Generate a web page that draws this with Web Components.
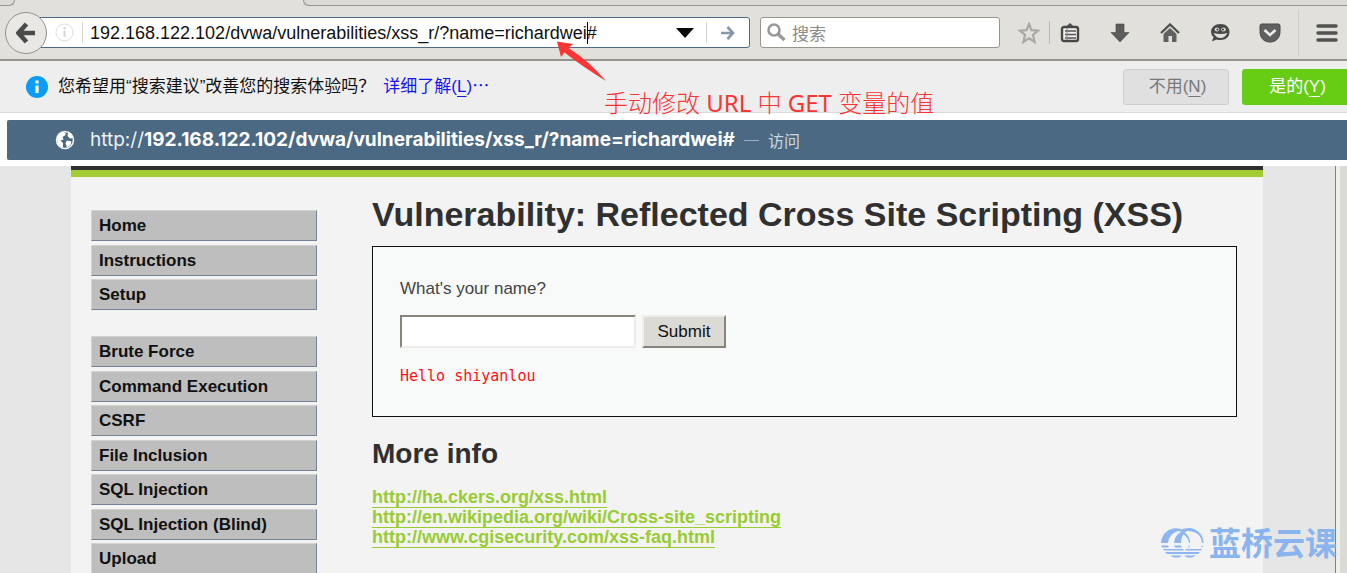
<!DOCTYPE html>
<html lang="zh-CN">
<head>
<meta charset="utf-8">
<title>Reflected Cross Site Scripting (XSS)</title>
<style>
html, body { height: 100%; }
body { margin: 0; overflow: hidden; font-family: "Liberation Sans", "Noto Sans CJK SC", sans-serif; font-size: 17px; color: #111; }
</style>
</head>
<body>
<browser-window>
  <tab-edge slot="chrome"></tab-edge>
  <nav-toolbar slot="chrome">
    <address-bar value="192.168.122.102/dvwa/vulnerabilities/xss_r/?name=richardwei#"></address-bar>
    <search-bar></search-bar>
    <toolbar-actions></toolbar-actions>
  </nav-toolbar>
  <notice-bar slot="chrome">您希望用“搜索建议”改善您的搜索体验吗？</notice-bar>
  <url-suggestion slot="chrome">
    <span slot="scheme">http://</span>
    <span slot="url">192.168.122.102/dvwa/vulnerabilities/xss_r/?name=richardwei#</span>
    <span slot="action">访问</span>
  </url-suggestion>
  <red-note slot="chrome">手动修改 <b>URL</b> 中 <b>GET</b> 变量的值</red-note>
  <web-page>
    <side-menu slot="menu">
      <menu-group>
        <menu-item>Home</menu-item><menu-item>Instructions</menu-item><menu-item>Setup</menu-item>
      </menu-group>
      <menu-group>
        <menu-item>Brute Force</menu-item><menu-item>Command Execution</menu-item><menu-item>CSRF</menu-item><menu-item>File Inclusion</menu-item><menu-item>SQL Injection</menu-item><menu-item>SQL Injection (Blind)</menu-item><menu-item>Upload</menu-item>
      </menu-group>
    </side-menu>
    <page-title>Vulnerability: Reflected Cross Site Scripting (XSS)</page-title>
    <name-form greeting="Hello shiyanlou"></name-form>
    <more-info></more-info>
    <site-watermark slot="mark">蓝桥云课</site-watermark>
  </web-page>
</browser-window>

<script>
const define = (name, html, setup) => {
  const template = document.createElement("template");
  template.innerHTML = html;
  customElements.define(name, class extends HTMLElement {
    connectedCallback() {
      if (this.shadowRoot) return;
      const root = this.attachShadow({ mode: "open" });
      root.append(template.content.cloneNode(true));
      if (setup) setup(this, root);
    }
  });
};

define("browser-window", `
<style>
:host { display: flex; flex-direction: column; height: 100vh; position: relative; background: #fff; overflow: hidden; }
</style>
<slot name="chrome"></slot><slot></slot>`);

// Lower edge of the tab strip, with the selected tab opening into the toolbar
define("tab-edge", `
<style>
:host { display: flex; height: 6px; background: #dbdad5; }
.before { width: 14px; border: 1px solid #98948f; border-width: 0 1px 1px 0; border-radius: 0 0 10px 0; }
.tab { width: 288px; background: #e1e0db; }
.after { flex: 1; border: 1px solid #98948f; border-width: 0 0 1px 1px; border-radius: 0 0 0 10px; }
</style>
<div class="before"></div><div class="tab"></div><div class="after"></div>`);

define("nav-toolbar", `
<style>
:host { display: flex; align-items: center; height: 53px; background: #e1e0db; border-bottom: 2px solid #96928e; box-sizing: content-box; gap: 10px; }
</style>
<slot></slot>`);

define("address-bar", `
<style>
:host { display: flex; align-items: center; flex: 1; min-width: 0; }
button { padding: 0; border: 0; background: none; display: flex; }
.back { width: 42px; height: 42px; margin-left: 5px; box-sizing: border-box; border: 1px solid #96928a; border-radius: 50%; background: #e9e8e4; align-items: center; justify-content: center; z-index: 1; }
.field { position: relative; flex: 1; display: flex; align-items: center; height: 31px; box-sizing: border-box; margin-left: -10px; padding-left: 17px; border: 1px solid #4d6a86; border-radius: 3px; background: #fff; min-width: 0; }
.line { width: 1px; height: 21px; background: #d4d4d4; }
input { flex: 1; min-width: 0; border: 0; outline: 0; padding: 0; margin-left: 7px; font: 18px/24px "Liberation Sans", sans-serif; color: #111; background: none; }
.caret { position: absolute; left: 549px; top: 4px; width: 1px; height: 22px; background: #000; }
.go { width: 42px; justify-content: center; }
</style>
<button class="back" aria-label="Back"><svg width="20" height="22" viewBox="0 0 20 22"><path d="M10.5 2 L2.5 11 L10.5 20 M3 11 H19" fill="none" stroke="#4b4b4b" stroke-width="4.600"/></svg></button>
<div class="field">
  <svg width="19" height="19" viewBox="0 0 19 19"><circle cx="9.500" cy="9.500" r="8.500" fill="none" stroke="#dedede"/><path d="M9.500 8v6M9.500 4v2.500" stroke="#d6d6d6" stroke-width="2"/></svg>
  <span class="line" style="margin-left:8px"></span>
  <input type="text" aria-label="Address">
  <span class="caret"></span>
  <button aria-label="History" style="margin-right:12px"><svg width="18" height="10" viewBox="0 0 18 10"><path d="M0 0H18L9 10Z" fill="#080808"/></svg></button>
  <span class="line"></span>
  <button class="go" aria-label="Go"><svg width="14" height="14" viewBox="0 0 14 14"><path d="M0 7H12M6.500 1L12 7L6.500 13" fill="none" stroke="#8497aa" stroke-width="2.600"/></svg></button>
</div>`, (host, root) => { root.querySelector("input").value = host.getAttribute("value"); });

define("search-bar", `
<style>
:host { display: flex; align-items: center; width: 240px; height: 31px; box-sizing: border-box; border: 1px solid #97938d; border-radius: 3px; background: #fff; padding-left: 6px; gap: 6px; }
input { flex: 1; min-width: 0; border: 0; outline: 0; padding: 0; background: none; font: 17px/24px "Noto Sans CJK SC", sans-serif; }
input::placeholder { color: #8b8b8b; opacity: 1; }
</style>
<svg width="19" height="19" viewBox="0 0 19 19"><circle cx="7" cy="7" r="5.500" fill="none" stroke="#999" stroke-width="2.600"/><path d="M11 11L17.500 17" stroke="#999" stroke-width="3.400"/></svg>
<input type="search" aria-label="搜索" placeholder="搜索">`);

define("toolbar-actions", `
<style>
:host { display: flex; align-items: center; padding-left: 7px; padding-right: 8px; color: #515151; }
button { padding: 0; border: 0; background: none; color: inherit; display: flex; width: 24px; justify-content: center; margin-right: 26px; }
button.star { margin-right: 8px; }
button.pocket { margin-right: 16px; }
button.menu { margin: 0; }
.line { width: 1px; height: 23px; background: #b9b7b2; margin-right: 8px; }
.tall { height: 46px; margin-right: 16px; background: #d0cec9; }
</style>
<button class="star" aria-label="Bookmark"><svg width="22" height="22" viewBox="0 0 22 22"><path d="M11 2L13.500 8.200L20 8.700L15 13L16.600 20L11 16.300L5.400 20L7 13L2 8.700L8.500 8.200Z" fill="none" stroke="#a9a8a5" stroke-width="2.200"/></svg></button>
<span class="line"></span>
<button aria-label="Bookmarks"><svg width="20" height="20" viewBox="0 0 20 20"><path d="M5.500 4L10 0L14.500 4Z" fill="#515151"/><rect x="2" y="4" width="16" height="14" rx="2" fill="#f0efec" stroke="#484848" stroke-width="2.400"/><path d="M5 8H16M5 11.500H16M5 15H16" stroke="#555" stroke-width="1.300"/><path d="M7 5V17" stroke="#888" stroke-width="1"/></svg></button>
<button aria-label="Downloads"><svg width="20" height="20" viewBox="0 0 20 20"><path d="M6 1H14V9.500H19L10 19L1 9.500H6Z" fill="#5c5c5c" stroke="#484848" stroke-width=".6"/></svg></button>
<button aria-label="Home"><svg width="20" height="20" viewBox="0 0 20 20"><path d="M1 10L10 1.500L19 10" fill="none" stroke="#515151" stroke-width="2.400"/><path d="M3.500 11L10 5L16.500 11V19H12V13H8.500V19H3.500Z" fill="#606060"/></svg></button>
<button aria-label="Chat"><svg width="20" height="20" viewBox="0 0 20 20"><path d="M10.500 1C16 1 19.500 4.500 19.500 9C19.500 13.500 16 17 10.500 17Q8 17 6.500 16.500L2 18.500L3.500 14Q1 12 1 9C1 4.500 5 1 10.500 1Z" fill="#484848"/><ellipse cx="7" cy="6.500" rx="2.300" ry="2" fill="#ddd"/><ellipse cx="13.500" cy="6.500" rx="2.300" ry="2" fill="#ddd"/><circle cx="7.500" cy="6.500" r="1" fill="#333"/><circle cx="13" cy="6.500" r="1" fill="#333"/><path d="M3.500 10Q10.500 12 17.500 10Q15 15 10.500 15Q6 15 3.500 10Z" fill="#e1e0db"/></svg></button>
<button class="pocket" aria-label="Pocket"><svg width="22" height="20" viewBox="0 0 22 20"><path d="M2.500 1H19.500Q21 1 21 3V8.500C21 15 17 19 11 19S1 15 1 8.500V3Q1 1 2.500 1Z" fill="#606060" stroke="#484848"/><path d="M5.500 7L11 12L16.500 7" fill="none" stroke="#ecebe8" stroke-width="2.600"/></svg></button>
<span class="line tall"></span>
<button class="menu" aria-label="Menu"><svg width="22" height="18" viewBox="0 0 22 18"><path d="M2 2H20M2 9H20M2 16H20" stroke="#515151" stroke-width="3.400" stroke-linecap="round"/></svg></button>`);

define("notice-bar", `
<style>
:host { display: flex; align-items: center; height: 51px; background: #eee; border-bottom: 1px solid #d9d9d9; padding-left: 26px; font-size: 17px; line-height: 24px; white-space: nowrap; }
svg { margin-right: 10px; }
a { margin: 0 auto 0 8px; color: #1414f0; text-decoration: none; }
u { text-underline-offset: 4px; text-decoration-thickness: 1px; }
button { height: 36px; box-sizing: border-box; font: inherit; padding: 0; border-radius: 3px; width: 106px; }
.no { border: 1px solid #cfcfcf; background: #e0e0e0; color: #777; margin-right: 13px; padding-left: 3px; }
.yes { border: 0; background: #66cc14; color: #fff; width: 105px; border-radius: 3px 0 0 3px; padding-left: 6px; }
</style>
<svg width="22" height="22" viewBox="0 0 22 22"><circle cx="11" cy="11" r="11" fill="#0b9df5"/><path d="M11 9.500V17M11 4.500V7.500" stroke="#fff" stroke-width="3.200"/></svg>
<span><slot></slot></span><a href="#">详细了解(<u>L</u>)⋯</a>
<button class="no">不用(<u>N</u>)</button><button class="yes">是的(<u>Y</u>)</button>`);

define("url-suggestion", `
<style>
:host { display: flex; padding: 7px 0 6px 7px; background: #fff; }
.row { flex: 1; display: flex; align-items: center; height: 40px; background: #4b6983; border-radius: 2px 0 0 2px; padding-left: 48px; color: #eef2f5; font-size: 16px; white-space: nowrap; }
.url { font: 19px/24px Inter, sans-serif; margin-left: 15px; }
.bold { font-weight: 700; color: #fff; }
.dash { width: 15px; height: 1px; background: #9fb0bf; margin: 0 9px; }
.act { color: #ccd6df; }
</style>
<div class="row">
<svg width="20" height="20" viewBox="0 0 20 20"><circle cx="10" cy="10" r="8.500" fill="#4b6983" stroke="#f5f7f9" stroke-width="1.500"/><path d="M2 7Q4 3 8 2L11 3L10 5.500L7.500 7L8.500 9.500L5.500 10.500L8 13V17.500Q4 16.500 2.500 13ZM13 2.500Q17 4 18.200 8L15 8.500L12.500 6ZM12 10.500L16.500 11.500L15.500 15L12 17.500L10.500 13Z" fill="#fff"/></svg>
<span class="url"><slot name="scheme"></slot><span class="bold"><slot name="url"></slot></span></span>
<span class="dash"></span><span class="act"><slot name="action"></slot></span>
</div>`);

// Callout laid over the browser chrome: arrow to the address and its caption
define("red-note", `
<style>
:host { position: absolute; left: 556px; top: 40px; z-index: 3; color: #fb3434; }
svg { display: block; }
span { display: block; margin-left: 48px; margin-top: 4px; font: 24px/34px "Noto Sans", "Noto Sans CJK SC", sans-serif; font-weight: 300; white-space: nowrap; }
::slotted(b) { font-weight: 400; }
</style>
<svg width="52" height="42" viewBox="0 0 52 42"><path d="M1 1.500L17 4L12.500 8Q33 21 50 41Q27 27 8.500 12.500L5 17Z" fill="#fb3434"/></svg>
<span><slot></slot></span>`);

define("web-page", `
<style>
:host { flex: 1; min-height: 0; display: flex; overflow: hidden; background: #e6e6e6; position: relative; }
.sheet { flex: 1; min-width: 0; margin: 0 73px 0 71px; background: #f3f3f3; border-top: 4px solid #2f2f2f; overflow: hidden; }
.body { border-top: 7px solid #a1cc33; display: flex; gap: 55px; padding: 0 26px 0 20px; }
main { flex: 1; min-width: 0; padding-top: 17px; }
.scroll { width: 7px; background: #dbdad5; border-left: 4px solid #efeeeb; box-shadow: -1px 0 #85807a; }
</style>
<div class="sheet"><div class="body"><slot name="menu"></slot><main><slot></slot></main></div></div>
<div class="scroll"></div>
<slot name="mark"></slot>`);

define("side-menu", `
<style>
:host { display: flex; flex-direction: column; gap: 26px; width: 226px; padding-top: 33px; }
</style>
<slot></slot>`);

define("menu-group", `
<style>
:host { display: flex; flex-direction: column; gap: 3px; }
::slotted(:nth-child(even)) { margin-top: 1px; }
</style>
<slot></slot>`);

define("menu-item", `
<style>
:host { display: block; }
a { display: block; height: 31px; box-sizing: border-box; padding-left: 7px; border: 1px solid #d2d2d2; border-right-color: #75839a; border-bottom-color: #75839a; background: #bebebe; color: #111; font: 700 17px/30px "Liberation Sans", sans-serif; text-decoration: none; white-space: nowrap; }
</style>
<a href="#"><slot></slot></a>`);

define("page-title", `
<style>
:host { display: block; }
h1 { margin: 0 0 12px; font: 700 34px/40px "Liberation Sans", sans-serif; color: #303030; }
</style>
<h1><slot></slot></h1>`);

define("name-form", `
<style>
:host { display: block; border: 1px solid #111; background: #f8faf9; padding: 30px 27px 28px; color: #444; }
label { display: block; line-height: 24px; margin-bottom: 14px; }
div { display: flex; gap: 6px; margin-bottom: 16px; }
input { width: 236px; height: 33px; box-sizing: border-box; background: #fff; border: 2px solid; border-color: #88847a #eeedea #eeedea #88847a; font: inherit; }
button { width: 84px; height: 33px; box-sizing: border-box; padding: 0; background: #dbdad5; border: 2px solid; border-color: #efeeeb #88847a #88847a #efeeeb; font: inherit; color: #111; }
pre { margin: 0; font: 15px/24px "DejaVu Sans Mono", monospace; color: #f11; }
</style>
<form onsubmit="return false"><label for="n">What's your name?</label>
<div><input id="n" type="text"><button>Submit</button></div></form>
<pre></pre>`, (host, root) => { root.querySelector("pre").textContent = host.getAttribute("greeting"); });

define("more-info", `
<style>
:host { display: block; }
h2 { margin: 20px 0 16px; font: 700 28px/34px "Liberation Sans", sans-serif; color: #303030; }
ul { list-style: none; margin: 0; padding: 0; }
li { height: 20px; }
a { display: inline-block; box-sizing: border-box; height: 21px; font: 700 18px/20px "Liberation Sans", sans-serif; color: #9c3; text-decoration: none; border-bottom: 1px solid #9c3; }
</style>
<h2>More info</h2>
<ul>
<li><a href="#">http://ha.ckers.org/xss.html</a></li>
<li><a href="#">http://en.wikipedia.org/wiki/Cross-site_scripting</a></li>
<li><a href="#">http://www.cgisecurity.com/xss-faq.html</a></li>
</ul>`);

define("site-watermark", `
<style>
:host { position: absolute; right: 10px; bottom: 14px; display: flex; align-items: center; gap: 5px; color: #8ab4ee; font: 700 32px/36px "Noto Sans CJK SC", sans-serif; }
svg { margin-top: 4px; }
</style>
<svg width="43" height="30" viewBox="0 0 43 30"><g fill="#8cb6f1"><path d="M0 15A15 15 0 0 1 22 2Q8 4 7 15Z"/><path d="M13 15Q14 4 26 2.500Q20 7 20 15Z"/><path d="M17 3Q22 0 28 0A15 15 0 0 1 42.500 15H41Q40 4 28 3Q24 3 22 4Z"/><path d="M23 4Q29 8 29 15H28Q27 9 22 6Z"/><path d="M0 17.500H7L8 19.500H1ZM13 17.500H20L21 19.500H14ZM28 17.500H29L28 19.500H27ZM41 17.500H42L41 19.500H40ZM2 21H22L23 22.500H3ZM25 21H41L40 22.500H24ZM4 24H39L37 26H6ZM9 27.500H21L18 29.500H13ZM23 27.500H35L31 29.500H26Z"/></g></svg>
<span><slot></slot></span>`);
</script>
</body>
</html>
